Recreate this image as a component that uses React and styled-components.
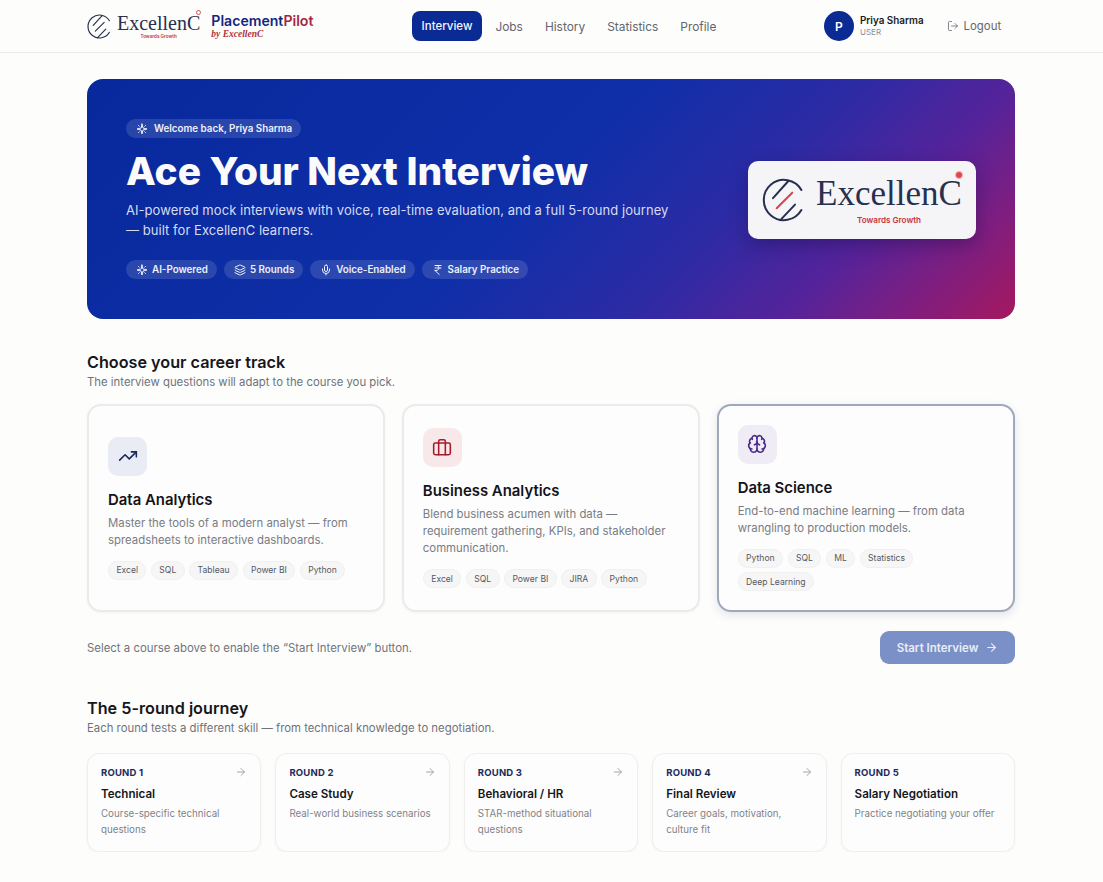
import React from 'react';
import styled, { createGlobalStyle } from 'styled-components';
import { Layers, Mic, IndianRupee, TrendingUp, Briefcase, Brain, ArrowRight, LogOut } from 'lucide-react';

const GlobalStyle = createGlobalStyle`
  * { box-sizing: border-box; }
  body {
    margin: 0;
    background: #fdfdfc;
    font-family: Inter, "Liberation Sans", sans-serif;
    color: #0f1115;
  }
`;

const Header = styled.header`
  height: 53px;
  padding: 0 88px 0 87px;
  display: flex;
  align-items: center;
  justify-content: space-between;
  border-bottom: 1px solid #ececea;
`;

const Brand = styled.div`
  width: 227px;
  display: flex;
  align-items: center;
  gap: 11px;
`;

const LogoRow = styled.div`
  display: flex;
  align-items: center;
  gap: ${(p) => (p.$large ? 10 : 5)}px;
`;

const LogoWords = styled.div`
  position: relative;
  display: flex;
  flex-direction: column;
  align-items: center;
`;

const LogoName = styled.span`
  font-family: "Liberation Serif", serif;
  font-size: ${(p) => (p.$large ? 35 : 20)}px;
  line-height: ${(p) => (p.$large ? 38 : 20)}px;
  color: #27304f;
  white-space: nowrap;
`;

const LogoTag = styled.span`
  font-size: ${(p) => (p.$large ? 8.1 : 4.6)}px;
  line-height: ${(p) => (p.$large ? 11 : 6)}px;
  margin-top: ${(p) => (p.$large ? 2 : 1)}px;
  font-weight: 600;
  color: #c8323c;
  white-space: nowrap;
`;

const LogoDot = styled.span`
  position: absolute;
  top: ${(p) => (p.$large ? -4 : -3)}px;
  right: -1px;
  width: ${(p) => (p.$large ? 8 : 5)}px;
  height: ${(p) => (p.$large ? 8 : 5)}px;
  border-radius: 50%;
  background: ${(p) => (p.$large ? '#e0444c' : 'transparent')};
  border: 1px solid ${(p) => (p.$large ? '#f3b2b4' : '#d8555c')};
`;

const Product = styled.div`
  display: flex;
  flex-direction: column;
`;

const ProductName = styled.span`
  font-size: 14.1px;
  line-height: 16px;
  font-weight: 600;
  color: #13267e;
  white-space: nowrap;
  span { color: #a3283f; }
`;

const ProductBy = styled.span`
  font-family: "Liberation Serif", serif;
  font-style: italic;
  font-weight: 700;
  font-size: 9.5px;
  line-height: 10px;
  color: #b03040;
`;

const Nav = styled.nav`
  display: flex;
  align-items: center;
  gap: 2px;
`;

const NavItem = styled.a`
  height: 30px;
  padding: 0 10px;
  display: flex;
  align-items: center;
  border-radius: 8px;
  font-size: ${(p) => (p.$active ? 11.5 : 11.9)}px;
  font-weight: ${(p) => (p.$active ? 500 : 400)};
  color: ${(p) => (p.$active ? '#f4f6fc' : '#62666f')};
  background: ${(p) => (p.$active ? '#0a2a94' : 'transparent')};
  margin-right: ${(p) => (p.$active ? 1 : 0)}px;
`;

const UserArea = styled.div`
  width: 191px;
  display: flex;
  align-items: center;
`;

const Avatar = styled.div`
  width: 30px;
  height: 30px;
  border-radius: 50%;
  background: #0a2a94;
  color: #fff;
  font-size: 12px;
  font-weight: 600;
  display: flex;
  align-items: center;
  justify-content: center;
`;

const UserText = styled.div`
  margin-left: 6px;
  display: flex;
  flex-direction: column;
`;

const UserName = styled.span`
  font-size: 9.9px;
  line-height: 13px;
  font-weight: 600;
  color: #1a1c22;
  white-space: nowrap;
`;

const UserRole = styled.span`
  font-size: 8px;
  line-height: 11px;
  color: #8b8e96;
`;

const Logout = styled.a`
  margin-left: 23px;
  display: flex;
  align-items: center;
  gap: 5px;
  font-size: 11.4px;
  color: #62666f;
`;

const Main = styled.main`
  padding: 26px 88px 0 87px;
`;

const Hero = styled.section`
  height: 240px;
  padding: 0 39px;
  display: flex;
  align-items: center;
  justify-content: space-between;
  border-radius: 16px;
  background: linear-gradient(135deg, #08299c 0%, #0e2fa8 48%, #2b2ba5 66%, #55239a 80%, #7f1e80 90%, #a5185e 100%);
`;

const HeroText = styled.div`
  width: 550px;
  display: flex;
  flex-direction: column;
  align-items: flex-start;
`;

const Pill = styled.span`
  height: 19px;
  padding: 0 9px 0 10px;
  display: inline-flex;
  align-items: center;
  gap: ${(p) => (p.$tight ? 4 : 6)}px;
  border-radius: 10px;
  background: rgba(255, 255, 255, 0.13);
  color: #eef0fa;
  font-size: 9.8px;
  font-weight: 600;
  white-space: nowrap;
`;

const HeroTitle = styled.h1`
  margin: 10px 0 7px;
  font-size: 38.8px;
  line-height: 46px;
  font-weight: 800;
  color: #fbfbfb;
  white-space: nowrap;
`;

const HeroCopy = styled.p`
  margin: 0 0 20px;
  font-size: 13px;
  line-height: 19.5px;
  letter-spacing: 0.05px;
  color: #d7dcf2;
`;

const PillRow = styled.div`
  display: flex;
  gap: 7px;
`;

const LogoCard = styled.div`
  width: 228px;
  height: 78px;
  margin-top: 2px;
  border-radius: 10px;
  background: #f5f5f8;
  box-shadow: 0 6px 18px rgba(20, 10, 60, 0.35);
  display: flex;
  align-items: center;
  justify-content: center;
`;

const Section = styled.section`
  margin-top: ${(p) => p.$top}px;
`;

const SectionTitle = styled.h2`
  margin: 0;
  font-size: 16.2px;
  line-height: 24px;
  font-weight: 600;
  color: #15171c;
`;

const SectionSub = styled.p`
  margin: 0;
  font-size: 11.35px;
  line-height: 16px;
  color: #6f727a;
`;

const TrackGrid = styled.div`
  margin-top: 14px;
  display: grid;
  grid-template-columns: repeat(3, 1fr);
  gap: 16.5px;
`;

const TrackCard = styled.article`
  height: 208px;
  padding: 0 22px 0 19px;
  display: flex;
  flex-direction: column;
  justify-content: center;
  align-items: flex-start;
  border-radius: 14px;
  background: #fdfdfd;
  border: ${(p) => (p.$selected ? '2px solid #a0a8bc' : '2px solid #ebebeb')};
  box-shadow: ${(p) => (p.$selected ? '0 3px 10px rgba(60, 70, 110, 0.14)' : '0 1px 3px rgba(0, 0, 0, 0.04)')};
`;

const IconTile = styled.div`
  width: 39px;
  height: 39px;
  border-radius: 10px;
  display: flex;
  align-items: center;
  justify-content: center;
  background: ${(p) => p.$bg};
  color: ${(p) => p.$fg};
`;

const TrackName = styled.h3`
  margin: 13px 0 4px;
  font-size: 14.9px;
  line-height: 22px;
  font-weight: 600;
  color: #12141a;
`;

const TrackCopy = styled.p`
  margin: 0 0 12px;
  font-size: 11.38px;
  line-height: 17px;
  color: #797c84;
`;

const ChipRow = styled.div`
  display: flex;
  flex-wrap: wrap;
  gap: 4.5px;
`;

const Chip = styled.span`
  height: 19px;
  padding: 0 7.4px;
  display: inline-flex;
  align-items: center;
  border-radius: 10px;
  background: #f6f6f6;
  border: 1px solid #f0f0f0;
  font-size: 8.6px;
  color: #565962;
`;

const ActionRow = styled.div`
  margin-top: 19px;
  display: flex;
  align-items: center;
  justify-content: space-between;
`;

const Hint = styled.span`
  font-size: 11.4px;
  color: #71747c;
`;

const StartButton = styled.button`
  width: 135px;
  height: 33px;
  border: 0;
  border-radius: 9px;
  display: flex;
  align-items: center;
  justify-content: center;
  gap: 7px;
  background: #7a90c6;
  color: #e9edf7;
  font-family: inherit;
  font-size: 11.5px;
  font-weight: 600;
`;

const RoundGrid = styled.div`
  margin-top: 17px;
  display: grid;
  grid-template-columns: repeat(5, 1fr);
  gap: 14px;
`;

const RoundCard = styled.article`
  height: 99px;
  padding: 12px 13px 0;
  border-radius: 12px;
  background: #fdfdfd;
  border: 1px solid #efefef;
  box-shadow: 0 1px 3px rgba(0, 0, 0, 0.04);
`;

const RoundHead = styled.div`
  height: 12px;
  display: flex;
  align-items: center;
  justify-content: space-between;
  color: #a3a5ab;
`;

const RoundLabel = styled.span`
  font-size: 9.5px;
  font-weight: 700;
  color: #1b2a5c;
  letter-spacing: 0.2px;
`;

const RoundName = styled.h4`
  margin: 8px 0 3px;
  font-size: 11.6px;
  line-height: 17px;
  font-weight: 600;
  color: #14161b;
`;

const RoundCopy = styled.p`
  margin: 0;
  font-size: 9.75px;
  line-height: 16px;
  color: #7f8289;
`;

const SparkIcon = ({ size = 12 }) => (
  <svg width={size} height={size} viewBox="0 0 24 24" fill="none" stroke="currentColor" strokeWidth="2" strokeLinecap="round" strokeLinejoin="round">
    <path d="M12 2 L14 10 L22 12 L14 14 L12 22 L10 14 L2 12 L10 10 Z" />
    <path d="M5 5 L6.5 6.5 M19 5 L17.5 6.5 M5 19 L6.5 17.5 M19 19 L17.5 17.5" />
  </svg>
);

const LogoMark = ({ size, accent }) => (
  <svg width={size} height={size} viewBox="0 0 48 48" fill="none" stroke="#27304f" strokeWidth="2.2" strokeLinecap="round">
    <path d="M43 13 A22 22 0 1 0 43 35" />
    <path d="M29 3 L12 22" />
    <path d="M33 16 L16 33" stroke={accent} />
    <path d="M36 29 L20 46" />
  </svg>
);

const tracks = [
  {
    name: 'Data Analytics',
    Icon: TrendingUp,
    bg: '#e9ecf4',
    fg: '#1b2a5c',
    copy: 'Master the tools of a modern analyst — from spreadsheets to interactive dashboards.',
    chips: ['Excel', 'SQL', 'Tableau', 'Power BI', 'Python'],
  },
  {
    name: 'Business Analytics',
    Icon: Briefcase,
    bg: '#f8e8e9',
    fg: '#a51d2d',
    copy: 'Blend business acumen with data — requirement gathering, KPIs, and stakeholder communication.',
    chips: ['Excel', 'SQL', 'Power BI', 'JIRA', 'Python'],
  },
  {
    name: 'Data Science',
    Icon: Brain,
    bg: '#efecf6',
    fg: '#4c2a8c',
    copy: 'End-to-end machine learning — from data wrangling to production models.',
    chips: ['Python', 'SQL', 'ML', 'Statistics', 'Deep Learning'],
    selected: true,
  },
];

const rounds = [
  { label: 'ROUND 1', name: 'Technical', copy: 'Course-specific technical questions' },
  { label: 'ROUND 2', name: 'Case Study', copy: 'Real-world business scenarios' },
  { label: 'ROUND 3', name: 'Behavioral / HR', copy: 'STAR-method situational questions' },
  { label: 'ROUND 4', name: 'Final Review', copy: 'Career goals, motivation, culture fit' },
  { label: 'ROUND 5', name: 'Salary Negotiation', copy: 'Practice negotiating your offer', last: true },
];

const heroPills = [
  { text: 'AI-Powered', Icon: SparkIcon },
  { text: '5 Rounds', Icon: Layers },
  { text: 'Voice-Enabled', Icon: Mic },
  { text: 'Salary Practice', Icon: IndianRupee },
];

export default function App() {
  return (
    <>
      <GlobalStyle />
      <Header>
        <Brand>
          <LogoRow>
            <LogoMark size={25} accent="#27304f" />
            <LogoWords>
              <LogoName>ExcellenC</LogoName>
              <LogoTag>Towards Growth</LogoTag>
              <LogoDot />
            </LogoWords>
          </LogoRow>
          <Product>
            <ProductName>Placement<span>Pilot</span></ProductName>
            <ProductBy>by ExcellenC</ProductBy>
          </Product>
        </Brand>
        <Nav>
          <NavItem $active>Interview</NavItem>
          <NavItem>Jobs</NavItem>
          <NavItem>History</NavItem>
          <NavItem>Statistics</NavItem>
          <NavItem>Profile</NavItem>
        </Nav>
        <UserArea>
          <Avatar>P</Avatar>
          <UserText>
            <UserName>Priya Sharma</UserName>
            <UserRole>USER</UserRole>
          </UserText>
          <Logout><LogOut size={12} strokeWidth={1.6} />Logout</Logout>
        </UserArea>
      </Header>

      <Main>
        <Hero>
          <HeroText>
            <Pill><SparkIcon />Welcome back, Priya Sharma</Pill>
            <HeroTitle>Ace Your Next Interview</HeroTitle>
            <HeroCopy>AI-powered mock interviews with voice, real-time evaluation, and a full 5-round journey — built for ExcellenC learners.</HeroCopy>
            <PillRow>
              {heroPills.map(({ text, Icon }) => (
                <Pill key={text} $tight><Icon size={12} />{text}</Pill>
              ))}
            </PillRow>
          </HeroText>
          <LogoCard>
            <LogoRow $large>
              <LogoMark size={44} accent="#d8454c" />
              <LogoWords>
                <LogoName $large>ExcellenC</LogoName>
                <LogoTag $large>Towards Growth</LogoTag>
                <LogoDot $large />
              </LogoWords>
            </LogoRow>
          </LogoCard>
        </Hero>

        <Section $top={31}>
          <SectionTitle>Choose your career track</SectionTitle>
          <SectionSub>The interview questions will adapt to the course you pick.</SectionSub>
          <TrackGrid>
            {tracks.map(({ name, Icon, bg, fg, copy, chips, selected }) => (
              <TrackCard key={name} $selected={selected}>
                <IconTile $bg={bg} $fg={fg}><Icon size={20} strokeWidth={1.9} /></IconTile>
                <TrackName>{name}</TrackName>
                <TrackCopy>{copy}</TrackCopy>
                <ChipRow>
                  {chips.map((c) => <Chip key={c}>{c}</Chip>)}
                </ChipRow>
              </TrackCard>
            ))}
          </TrackGrid>
          <ActionRow>
            <Hint>Select a course above to enable the “Start Interview” button.</Hint>
            <StartButton>Start Interview<ArrowRight size={13} /></StartButton>
          </ActionRow>
        </Section>

        <Section $top={32}>
          <SectionTitle>The 5-round journey</SectionTitle>
          <SectionSub>Each round tests a different skill — from technical knowledge to negotiation.</SectionSub>
          <RoundGrid>
            {rounds.map(({ label, name, copy, last }) => (
              <RoundCard key={label}>
                <RoundHead>
                  <RoundLabel>{label}</RoundLabel>
                  {!last && <ArrowRight size={12} />}
                </RoundHead>
                <RoundName>{name}</RoundName>
                <RoundCopy>{copy}</RoundCopy>
              </RoundCard>
            ))}
          </RoundGrid>
        </Section>
      </Main>
    </>
  );
}
